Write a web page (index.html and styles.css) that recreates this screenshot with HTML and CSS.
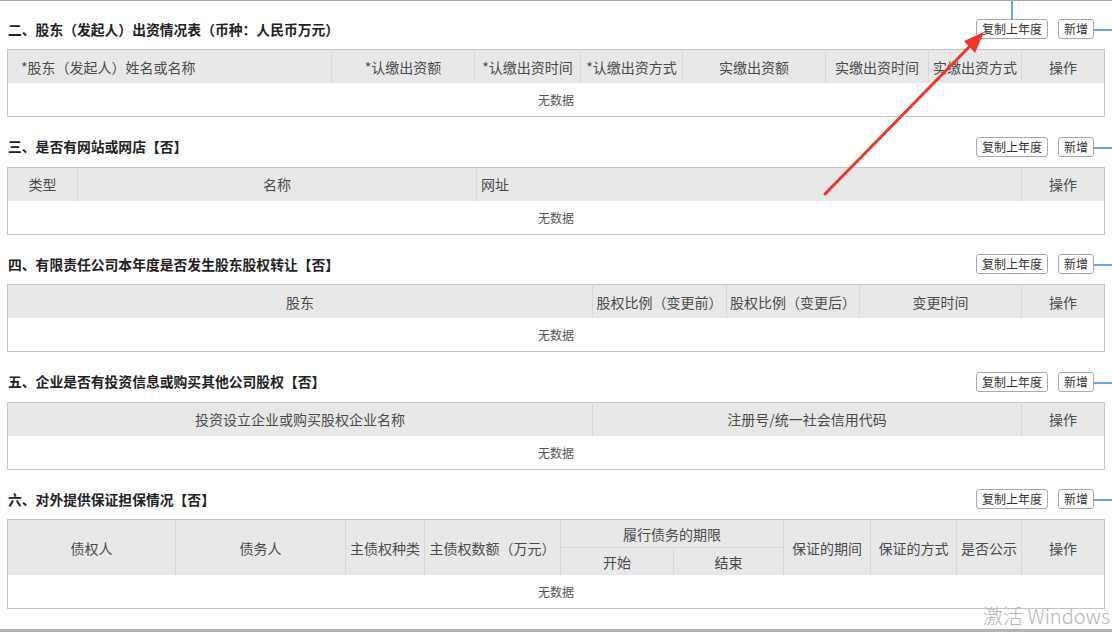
FILE: index.html
```html
<!DOCTYPE html>
<html lang="zh-CN">
<head>
  <meta charset="UTF-8" />
  <meta name="viewport" content="width=device-width, initial-scale=1.0"/>
  <title>年报填报 - 出资及股权信息</title>
  <link rel="stylesheet" href="styles.css">
</head>
<body>

  <div class="page">

    <!-- 二、股东出资 -->
    <section class="block">
      <div class="block-head">
        <h3 class="block-title">二、股东（发起人）出资情况表（币种：人民币万元）</h3>
        <div class="block-actions">
          <button class="btn btn-copy btn-marked">复制上年度</button>
          <button class="btn btn-add">新增</button>
        </div>
      </div>
      <table class="grid">
        <colgroup>
          <col style="width:324px"><col style="width:143px"><col style="width:106px"><col style="width:102px">
          <col style="width:143px"><col style="width:103px"><col style="width:93px"><col style="width:83px">
        </colgroup>
        <thead>
          <tr>
            <th class="left">*股东（发起人）姓名或名称</th>
            <th>*认缴出资额</th>
            <th>*认缴出资时间</th>
            <th>*认缴出资方式</th>
            <th>实缴出资额</th>
            <th>实缴出资时间</th>
            <th>实缴出资方式</th>
            <th>操作</th>
          </tr>
        </thead>
        <tbody>
          <tr><td colspan="8" class="empty">无数据</td></tr>
        </tbody>
      </table>
    </section>

    <!-- 三、网站网店 -->
    <section class="block">
      <div class="block-head">
        <h3 class="block-title">三、是否有网站或网店【否】</h3>
        <div class="block-actions">
          <button class="btn btn-copy">复制上年度</button>
          <button class="btn btn-add">新增</button>
        </div>
      </div>
      <table class="grid">
        <colgroup>
          <col style="width:70px"><col style="width:399px"><col style="width:545px"><col style="width:83px">
        </colgroup>
        <thead>
          <tr>
            <th>类型</th>
            <th>名称</th>
            <th class="left-tight">网址</th>
            <th>操作</th>
          </tr>
        </thead>
        <tbody>
          <tr><td colspan="4" class="empty">无数据</td></tr>
        </tbody>
      </table>
    </section>

    <!-- 四、股权转让 -->
    <section class="block">
      <div class="block-head">
        <h3 class="block-title">四、有限责任公司本年度是否发生股东股权转让【否】</h3>
        <div class="block-actions">
          <button class="btn btn-copy">复制上年度</button>
          <button class="btn btn-add">新增</button>
        </div>
      </div>
      <table class="grid">
        <colgroup>
          <col style="width:585px"><col style="width:134px"><col style="width:133px"><col style="width:162px"><col style="width:83px">
        </colgroup>
        <thead>
          <tr>
            <th>股东</th>
            <th>股权比例（变更前）</th>
            <th>股权比例（变更后）</th>
            <th>变更时间</th>
            <th>操作</th>
          </tr>
        </thead>
        <tbody>
          <tr><td colspan="5" class="empty">无数据</td></tr>
        </tbody>
      </table>
    </section>

    <!-- 五、对外投资 -->
    <section class="block">
      <div class="block-head">
        <h3 class="block-title">五、企业是否有投资信息或购买其他公司股权【否】</h3>
        <div class="block-actions">
          <button class="btn btn-copy">复制上年度</button>
          <button class="btn btn-add">新增</button>
        </div>
      </div>
      <table class="grid">
        <colgroup>
          <col style="width:585px"><col style="width:429px"><col style="width:83px">
        </colgroup>
        <thead>
          <tr>
            <th>投资设立企业或购买股权企业名称</th>
            <th>注册号/统一社会信用代码</th>
            <th>操作</th>
          </tr>
        </thead>
        <tbody>
          <tr><td colspan="3" class="empty">无数据</td></tr>
        </tbody>
      </table>
    </section>

    <!-- 六、对外担保 -->
    <section class="block">
      <div class="block-head">
        <h3 class="block-title">六、对外提供保证担保情况【否】</h3>
        <div class="block-actions">
          <button class="btn btn-copy">复制上年度</button>
          <button class="btn btn-add">新增</button>
        </div>
      </div>
      <table class="grid grid-double">
        <colgroup>
          <col style="width:168px"><col style="width:170px"><col style="width:79px"><col style="width:136px">
          <col style="width:113px"><col style="width:110px"><col style="width:87px"><col style="width:86px">
          <col style="width:65px"><col style="width:83px">
        </colgroup>
        <thead>
          <tr>
            <th rowspan="2">债权人</th>
            <th rowspan="2">债务人</th>
            <th rowspan="2">主债权种类</th>
            <th rowspan="2">主债权数额（万元）</th>
            <th colspan="2" class="group">履行债务的期限</th>
            <th rowspan="2">保证的期间</th>
            <th rowspan="2">保证的方式</th>
            <th rowspan="2">是否公示</th>
            <th rowspan="2">操作</th>
          </tr>
          <tr>
            <th>开始</th>
            <th>结束</th>
          </tr>
        </thead>
        <tbody>
          <tr><td colspan="10" class="empty">无数据</td></tr>
        </tbody>
      </table>
    </section>

  </div>

  <!-- 标注箭头 -->
  <svg class="mark-arrow" width="1112" height="632" viewBox="0 0 1112 632">
    <line x1="825" y1="193" x2="972" y2="43" stroke="#f2352b" stroke-width="3" stroke-linecap="round"/>
    <polygon points="984,31 964,40 975,52" fill="#f2352b"/>
  </svg>

  <div class="watermark">激活 Windows</div>

</body>
</html>
```

FILE: styles.css
```css
body {
  margin: 0;
  padding: 0;
  font-family: "Noto Sans CJK SC", "Noto Sans", sans-serif;
  color: #333;
  background: #fff;
  border-top: 1px solid #a8a8a8;
  height: 631px;
  overflow: hidden;
  position: relative;
}

.page {
  padding: 18px 8px 0 7px;
}

.block {
  margin-bottom: 19.5px;
}

.block-head {
  display: flex;
  align-items: center;
  justify-content: space-between;
  height: 20px;
  margin-bottom: 10px;
  padding: 0 10px 0 1px;
}

.block-title {
  margin: 0;
  font-size: 13.8px;
  font-weight: 600;
  color: #222;
  line-height: 19px;
}

.block-actions {
  display: flex;
  gap: 10px;
}

.btn {
  position: relative;
  height: 20px;
  padding: 0 5px;
  font-family: inherit;
  font-size: 12px;
  line-height: 18px;
  color: #333;
  background: #fff;
  border: 1px solid #a9a9a9;
  border-radius: 3px;
}

/* blue guide lines drawn over the buttons */
.btn-add::after {
  content: '';
  position: absolute;
  left: 100%;
  top: 9px;
  width: 20px;
  height: 2px;
  background: #6aa4e4;
}

.btn-marked::before {
  content: '';
  position: absolute;
  left: 34px;
  bottom: 100%;
  width: 2px;
  height: 20px;
  background: #6aa4e4;
}

.grid {
  width: 1097px;
  table-layout: fixed;
  border-collapse: collapse;
  border: 1px solid #c4c4c4;
}

.grid th {
  height: 33px;
  padding: 0 2px;
  font-size: 14px;
  font-weight: normal;
  color: #4a4a4a;
  background: #e8e8e8;
  border-left: 1px solid #d8d8d8;
  text-align: center;
  white-space: nowrap;
  overflow: visible;
}

.grid th:first-child {
  border-left: none;
}

.grid th.left {
  text-align: left;
  padding-left: 13px;
}

.grid th.left-tight {
  text-align: left;
  padding-left: 4px;
}

.grid-double th {
  height: 27px;
}

.grid-double thead tr:first-child th.group {
  border-bottom: 1px solid #dadada;
}

.grid-double thead tr:nth-child(2) th:first-child {
  border-left: 1px solid #d8d8d8;
}

.grid td.empty {
  height: 33px;
  padding: 0;
  text-align: center;
  font-size: 12px;
  color: #555;
}

.mark-arrow {
  position: absolute;
  top: 0;
  left: 0;
  pointer-events: none;
}

.watermark {
  position: absolute;
  right: 2px;
  bottom: 2px;
  font-family: "Noto Sans CJK SC", "Open Sans", sans-serif;
  font-size: 20px;
  font-weight: 300;
  color: #b5b5b5;
  pointer-events: none;
}

body::after {
  content: '';
  position: absolute;
  left: 0;
  right: 0;
  bottom: 0;
  height: 3px;
  background: #b4b4b4;
}
```
